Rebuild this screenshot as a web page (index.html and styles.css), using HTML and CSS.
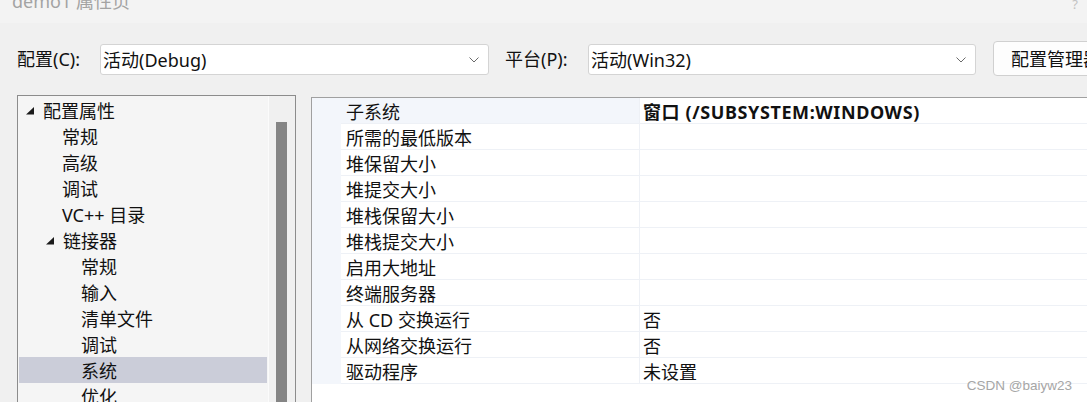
FILE: index.html
```html
<!DOCTYPE html>
<html lang="zh-CN">
<head>
<meta charset="utf-8">
<title>demo1 属性页</title>
<link rel="stylesheet" href="styles.css">
</head>
<body>
<div class="window">
  <div class="titlebar">
    <span class="title">demo1 属性页</span>
    <span class="help">?</span>
  </div>

  <div class="toolbar">
    <span class="label">配置(C):</span>
    <div class="combo combo-config">
      <span class="combo-text">活动(Debug)</span>
      <svg class="chev" width="10" height="6" viewBox="0 0 10 6"><polyline points="0.5,0.5 5,5 9.5,0.5" fill="none" stroke="#6a6a6a" stroke-width="1"/></svg>
    </div>
    <span class="label label-platform">平台(P):</span>
    <div class="combo combo-platform">
      <span class="combo-text">活动(Win32)</span>
      <svg class="chev" width="10" height="6" viewBox="0 0 10 6"><polyline points="0.5,0.5 5,5 9.5,0.5" fill="none" stroke="#6a6a6a" stroke-width="1"/></svg>
    </div>
    <button class="btn">配置管理器(O)...</button>
  </div>

  <div class="main">
    <div class="tree-panel">
      <ul class="tree">
        <li class="node l0"><span class="twist"><svg width="8" height="8" viewBox="0 0 8 8"><polygon points="8,0 8,7.5 0,7.5" fill="#1a1a1a"/></svg></span>配置属性</li>
        <li class="node l1">常规</li>
        <li class="node l1">高级</li>
        <li class="node l1">调试</li>
        <li class="node l1">VC++ 目录</li>
        <li class="node l1t"><span class="twist"><svg width="8" height="8" viewBox="0 0 8 8"><polygon points="8,0 8,7.5 0,7.5" fill="#1a1a1a"/></svg></span>链接器</li>
        <li class="node l2">常规</li>
        <li class="node l2">输入</li>
        <li class="node l2">清单文件</li>
        <li class="node l2">调试</li>
        <li class="node l2 selected">系统</li>
        <li class="node l2">优化</li>
      </ul>
      <div class="scroll">
        <div class="thumb"></div>
      </div>
    </div>

    <div class="grid-panel">
      <div class="grid">
        <div class="prow first"><span class="margin"></span><span class="pname">子系统</span><span class="pval bold">窗口 (/SUBSYSTEM:WINDOWS)</span></div>
        <div class="prow"><span class="margin"></span><span class="pname">所需的最低版本</span><span class="pval"></span></div>
        <div class="prow"><span class="margin"></span><span class="pname">堆保留大小</span><span class="pval"></span></div>
        <div class="prow"><span class="margin"></span><span class="pname">堆提交大小</span><span class="pval"></span></div>
        <div class="prow"><span class="margin"></span><span class="pname">堆栈保留大小</span><span class="pval"></span></div>
        <div class="prow"><span class="margin"></span><span class="pname">堆栈提交大小</span><span class="pval"></span></div>
        <div class="prow"><span class="margin"></span><span class="pname">启用大地址</span><span class="pval"></span></div>
        <div class="prow"><span class="margin"></span><span class="pname">终端服务器</span><span class="pval"></span></div>
        <div class="prow"><span class="margin"></span><span class="pname">从 CD 交换运行</span><span class="pval">否</span></div>
        <div class="prow"><span class="margin"></span><span class="pname">从网络交换运行</span><span class="pval">否</span></div>
        <div class="prow"><span class="margin"></span><span class="pname">驱动程序</span><span class="pval">未设置</span></div>
      </div>
    </div>
  </div>

  <div class="watermark">CSDN @baiyw23</div>
</div>
</body>
</html>
```

FILE: styles.css
```css
* { box-sizing: border-box; }

html, body {
  margin: 0;
  padding: 0;
}

body {
  width: 1087px;
  height: 402px;
  overflow: hidden;
  background: #f0f0f0;
  font-family: "Noto Sans", "Noto Sans CJK SC", sans-serif;
  font-size: 18px;
  color: #111;
}

.window {
  position: relative;
  width: 1087px;
  height: 402px;
  overflow: hidden;
}

.titlebar {
  height: 23px;
  background: #f3f3f3;
  display: flex;
  justify-content: space-between;
  align-items: flex-start;
  padding: 0 9px 0 12px;
}

.title {
  display: block;
  line-height: 18px;
  margin-top: -8px;
  color: #a3a3a3;
  font-size: 18px;
}

.help {
  display: block;
  line-height: 14px;
  margin-top: -3px;
  color: #c2c2c2;
  font-size: 13px;
}

.toolbar {
  display: flex;
  align-items: center;
  height: 35px;
  margin-top: 18px;
  padding-left: 17px;
  white-space: nowrap;
}

.label {
  width: 83px;
  flex: none;
  line-height: 26px;
  color: #111;
}

.label-platform {
  margin-left: 16px;
}

.combo {
  flex: none;
  height: 31px;
  margin-top: 2px;
  background: #fff;
  border: 1px solid #d4d4d4;
  border-radius: 3px;
  display: flex;
  align-items: center;
  justify-content: space-between;
  padding: 0 9px 0 2px;
}

.combo-config { width: 389px; }
.combo-platform { width: 388px; }

.combo-text {
  line-height: 26px;
  color: #111;
}

.chev { display: block; margin-top: 1px; }

.btn {
  flex: none;
  margin-left: 17px;
  height: 35px;
  width: 160px;
  background: #fdfdfd;
  border: 1px solid #d0d0d0;
  border-radius: 4px;
  font-family: inherit;
  font-size: 18px;
  color: #111;
  text-align: left;
  padding: 0 0 0 17px;
  line-height: 26px;
}

.main {
  display: flex;
  align-items: flex-start;
  margin-top: 19px;
  padding-left: 17px;
}

.tree-panel {
  flex: none;
  width: 279px;
  height: 320px;
  border: 1px solid #8c8c8c;
  background: #f5f5f5;
  display: flex;
}

.tree {
  list-style: none;
  margin: 0;
  padding: 1px;
  width: 251px;
  flex: none;
  border-right: 1px solid #fbfbfb;
}

.node {
  height: 26px;
  padding-top: 2px;
  line-height: 24px;
  white-space: nowrap;
  display: flex;
  align-items: center;
  color: #111;
}

.twist {
  width: 17px;
  flex: none;
  display: flex;
  align-items: center;
}

.twist svg { display: block; margin-top: 0; }

.l0 { padding-left: 7px; }
.l1 { padding-left: 43px; }
.l1t { padding-left: 27px; }
.l2 { padding-left: 62px; }

.selected { background: #cbcdd9; }

.scroll {
  flex: 1;
  background: #f0f0f0;
  padding: 26px 8px 0 7px;
}

.thumb {
  width: 11px;
  height: 300px;
  background: #858585;
}

.grid-panel {
  flex: none;
  margin-left: 15px;
  margin-top: 2px;
  width: 800px;
  height: 320px;
  border-left: 1px solid #a0a0a0;
  border-top: 1px solid #a0a0a0;
  background: #fff;
}

.prow {
  display: flex;
  height: 26px;
}

.margin {
  width: 29px;
  flex: none;
  background: #f3f6fb;
}

.pname {
  width: 299px;
  flex: none;
  padding-left: 5px;
  padding-top: 3px;
  line-height: 22px;
  border-bottom: 1px solid #eef1f6;
  border-right: 1px solid #eef1f6;
  white-space: nowrap;
}

.first .pname { background: #f3f6fb; }

.pval {
  flex: 1;
  padding-left: 3px;
  padding-top: 3px;
  line-height: 22px;
  border-bottom: 1px solid #eef1f6;
  white-space: nowrap;
}

.bold {
  font-weight: 700;
  letter-spacing: 0.6px;
}

.watermark {
  position: absolute;
  right: 15px;
  top: 378px;
  font-family: "Liberation Sans", Arial, sans-serif;
  font-size: 13.5px;
  line-height: 16px;
  color: #a6a6a6;
}
```
